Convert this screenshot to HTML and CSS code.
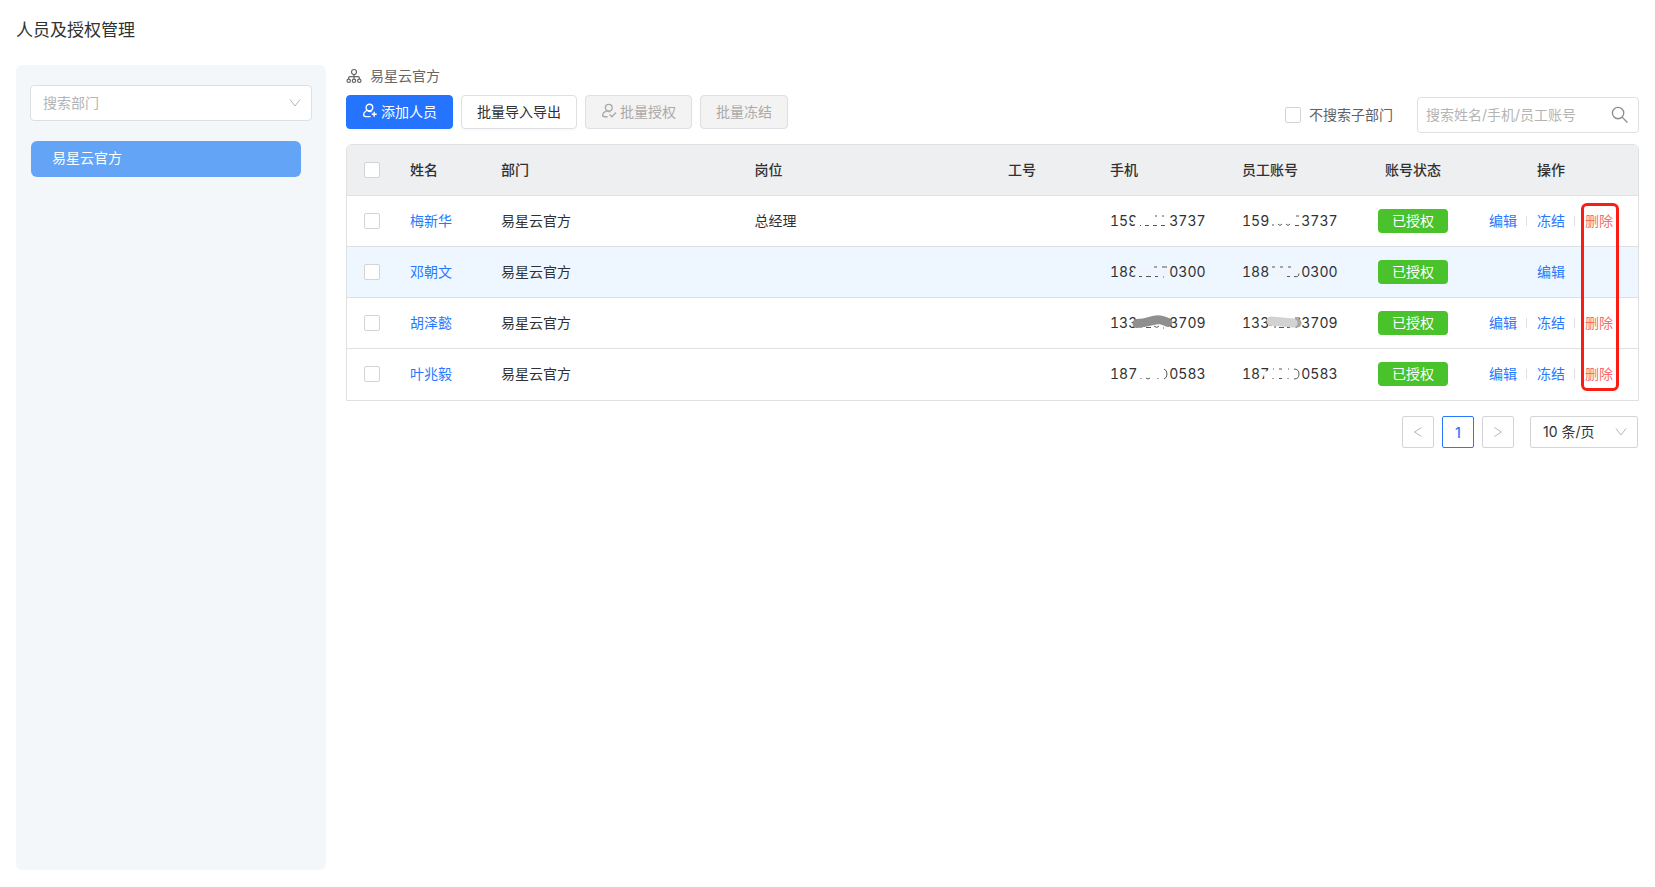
FILE: index.html
```html
<!DOCTYPE html>
<html lang="zh-CN">
<head>
    <meta charset="UTF-8">
    <meta name="viewport" content="width=device-width, initial-scale=1.0">
    <title>人员及授权管理</title>
    <link rel="stylesheet" href="styles.css">
</head>
<body>
    <div class="page">
        <h1>人员及授权管理</h1>
        <div class="layout">
            <aside class="sidebar">
                <div class="select-box dept-select">
                    <select aria-label="搜索部门">
                        <option>搜索部门</option>
                    </select>
                    <svg class="arrow" viewBox="0 0 12 12"><path d="M1 2.5 L6 9 L11 2.5"/></svg>
                </div>
                <a href="#" class="dept-item">易星云官方</a>
            </aside>

            <main class="content">
                <div class="crumb">
                    <svg class="icon thin" viewBox="0 0 16 16"><circle cx="8" cy="4" r="2.5"/><path d="M8 6.5V11M2.6 11V10q0-1.4 1.4-1.4h8q1.4 0 1.4 1.4V11"/><circle cx="2.7" cy="12.8" r="1.7"/><circle cx="8" cy="12.8" r="1.7"/><circle cx="13.3" cy="12.8" r="1.7"/></svg>
                    <span>易星云官方</span>
                </div>

                <div class="toolbar">
                    <div class="button-group">
                        <button class="btn primary">
                            <svg class="icon" viewBox="0 0 16 16"><circle cx="7.4" cy="4.6" r="3.3"/><path d="M5 7C6 8.4 7.6 8.6 9.6 8.6M5 7C4.8 8.4 1.6 8.4 1.6 11.6c0 1.6 1 2 2.2 2H8.6M12.2 8.7v5M9.7 11.2h5"/></svg>
                            添加人员
                        </button>
                        <button class="btn">批量导入导出</button>
                        <button class="btn" disabled>
                            <svg class="icon" viewBox="0 0 16 16"><circle cx="7.8" cy="4.8" r="3.4"/><path d="M5.8 7.4C6.6 8.6 7.8 8.8 9.4 8.8M5.8 7.4C5.4 8.8 1.6 8.8 1.6 12c0 1.4 1 1.8 2.2 1.8h2.8M8.6 11.4l2.4 2.4 4-4.2"/></svg>
                            批量授权
                        </button>
                        <button class="btn" disabled>批量冻结</button>
                    </div>
                    <div class="search-group">
                        <label class="check-label"><input type="checkbox">不搜索子部门</label>
                        <div class="search-box">
                            <input type="text" placeholder="搜索姓名/手机/员工账号" aria-label="搜索姓名/手机/员工账号">
                            <button class="search-btn" aria-label="搜索">
                                <svg viewBox="0 0 18 18"><circle cx="7.5" cy="7.5" r="6"/><path d="M11.8 11.8L17.4 17.4"/></svg>
                            </button>
                        </div>
                    </div>
                </div>

                <div class="table-wrap">
                    <table>
                        <thead>
                            <tr>
                                <th class="col-check"><input type="checkbox" aria-label="全选"></th>
                                <th class="col-name">姓名</th>
                                <th>部门</th>
                                <th>岗位</th>
                                <th class="col-no">工号</th>
                                <th class="col-phone">手机</th>
                                <th class="col-phone">员工账号</th>
                                <th class="col-status">账号状态</th>
                                <th class="col-action">操作</th>
                            </tr>
                        </thead>
                        <tbody>
                            <tr>
                                <td class="col-check"><input type="checkbox" aria-label="梅新华"></td>
                                <td><a href="#">梅新华</a></td>
                                <td>易星云官方</td>
                                <td>总经理</td>
                                <td></td>
                                <td class="num">159<svg class="mask" viewBox="0 0 32 12"><path class="smear" d="M0 6H32"/><path class="trace" d="M3 10.5h1M8 10.5h4M16 10.5h4M24 10.5h4M18 1h2M25 1h2"/></svg>3737</td>
                                <td class="num">159<svg class="mask" viewBox="0 0 32 12"><path class="smear" d="M4 5H29"/><path class="trace" d="M4 9v2M9 9q2 3 4 0M17 9q2 3 4 0M26 10.5h4M27 1h3"/></svg>3737</td>
                                <td class="col-status"><span class="tag">已授权</span></td>
                                <td class="col-action"><div class="actions"><a href="#">编辑</a><a href="#">冻结</a><a href="#" class="danger">删除</a></div></td>
                            </tr>
                            <tr class="active">
                                <td class="col-check"><input type="checkbox" aria-label="邓朝文"></td>
                                <td><a href="#">邓朝文</a></td>
                                <td>易星云官方</td>
                                <td></td>
                                <td></td>
                                <td class="num">188<svg class="mask" viewBox="0 0 32 12"><path class="smear" d="M0 6H32"/><path class="trace" d="M2 10.5h3M9 10.5h5M18 10.5h3M26 11h1M17 1h3M25 1h5"/></svg>0300</td>
                                <td class="num">188<svg class="mask" viewBox="0 0 32 12"><path class="smear" d="M4 6H27"/><path class="trace" d="M3 1h3M11 1h3M19 1h3M18 10.5h3M25 10.5q5 1 5-3"/></svg>0300</td>
                                <td class="col-status"><span class="tag">已授权</span></td>
                                <td class="col-action"><div class="actions"><a href="#">编辑</a></div></td>
                            </tr>
                            <tr>
                                <td class="col-check"><input type="checkbox" aria-label="胡泽懿"></td>
                                <td><a href="#">胡泽懿</a></td>
                                <td>易星云官方</td>
                                <td></td>
                                <td></td>
                                <td class="num">133<svg class="mask" viewBox="0 0 32 12"><path class="trace" d="M4 7v4M9 10.5h5M17 9q3 3 5 0M26 11h1"/><path class="brush" d="M0 6.5Q7 6 12 4.5Q20 2 24 3Q28 4 31 5.5"/></svg>3709</td>
                                <td class="num">133<svg class="mask" viewBox="0 0 32 12"><path class="trace" d="M0 8h3M6 7v4M10 10.5h5M18 10.5h3M26 1h5l-4 10"/><path class="brush end" d="M27 6h1"/><path class="brush light" d="M2 4L24 6"/></svg>3709</td>
                                <td class="col-status"><span class="tag">已授权</span></td>
                                <td class="col-action"><div class="actions"><a href="#">编辑</a><a href="#">冻结</a><a href="#" class="danger">删除</a></div></td>
                            </tr>
                            <tr>
                                <td class="col-check"><input type="checkbox" aria-label="叶兆毅"></td>
                                <td><a href="#">叶兆毅</a></td>
                                <td>易星云官方</td>
                                <td></td>
                                <td></td>
                                <td class="num">187<svg class="mask" viewBox="0 0 32 12"><path class="smear" d="M3 6H27"/><path class="trace" d="M4 10v1M9 10q2 2 4 0M21 10v1M27 1q3 1 3 5q0 4-3 5"/></svg>0583</td>
                                <td class="num">187<svg class="mask" viewBox="0 0 32 12"><path class="smear" d="M-1 7H27"/><path class="trace" d="M4 1h1M4 10v1M10 1h3M10 10.5h3M19 1h1M19 10v1M25 1q5 0 5 5q0 5-5 5"/></svg>0583</td>
                                <td class="col-status"><span class="tag">已授权</span></td>
                                <td class="col-action"><div class="actions"><a href="#">编辑</a><a href="#">冻结</a><a href="#" class="danger">删除</a></div></td>
                            </tr>
                        </tbody>
                    </table>
                    <div class="highlight"></div>
                </div>

                <div class="pagination">
                    <button class="page-btn" aria-label="上一页"><svg class="arrow" viewBox="0 0 12 12"><path d="M9.5 1.5L2.5 6l7 4.5"/></svg></button>
                    <button class="page-btn current">1</button>
                    <button class="page-btn" aria-label="下一页"><svg class="arrow" viewBox="0 0 12 12"><path d="M2.5 1.5L9.5 6l-7 4.5"/></svg></button>
                    <div class="select-box size-select">
                        <select aria-label="每页条数">
                            <option>10 条/页</option>
                        </select>
                        <svg class="arrow" viewBox="0 0 12 12"><path d="M1 2.5 L6 9 L11 2.5"/></svg>
                    </div>
                </div>
            </main>
        </div>
    </div>
</body>
</html>
```
FILE: styles.css
```css
* {
    box-sizing: border-box;
}
body {
    margin: 0;
    background-color: #fff;
    color: #303133;
    font-family: Inter, "Noto Sans CJK SC", sans-serif;
    font-size: 14px;
    line-height: 22px;
}
a {
    color: #2878ff;
    text-decoration: none;
}
button, input, select {
    font-family: inherit;
    font-size: 14px;
    color: inherit;
}
svg {
    fill: none;
    stroke: currentColor;
    flex-shrink: 0;
}
.page {
    display: flex;
    flex-direction: column;
    min-height: 100vh;
    padding: 18px 16px 17px;
}
h1 {
    margin: 0 0 23px;
    font-size: 17px;
    font-weight: 400;
    line-height: 24px;
}
.layout {
    display: flex;
    flex: 1;
    gap: 20px;
}

/* sidebar */
.sidebar {
    width: 310px;
    flex-shrink: 0;
    padding: 20px 14px;
    border-radius: 6px;
    background-color: #f3f7fa;
}
.select-box {
    position: relative;
}
.select-box select {
    width: 100%;
    height: 100%;
    padding: 0 12px 2px;
    border: 1px solid #dcdfe3;
    border-radius: 4px;
    background-color: #fff;
    appearance: none;
}
.select-box .arrow {
    position: absolute;
    top: 50%;
    right: 11px;
    margin-top: -6px;
    pointer-events: none;
}
.arrow {
    width: 12px;
    height: 12px;
    color: #b4b7bb;
}
.dept-select {
    height: 36px;
    margin-bottom: 20px;
}
.dept-select select {
    color: #b4b4b4;
}
.dept-item {
    display: block;
    margin: 0 11px 0 1px;
    padding: 6px 21px 8px;
    border-radius: 6px;
    background-color: #63a4f7;
    color: #fff;
}

/* toolbar */
.content {
    flex: 1;
    min-width: 0;
}
.icon {
    width: 16px;
    height: 16px;
    stroke-width: 1.4;
}
.icon.thin {
    stroke-width: 1.2;
}
.crumb {
    display: flex;
    align-items: center;
    gap: 8px;
    color: #666;
}
.toolbar {
    display: flex;
    justify-content: space-between;
    margin: 8px 0 11px;
}
.button-group {
    display: flex;
    align-items: flex-start;
    gap: 8px;
}
.btn {
    display: flex;
    align-items: center;
    gap: 3px;
    height: 34px;
    padding: 0 15px 2px;
    border: 1px solid #dcdfe3;
    border-radius: 4px;
    background-color: #fff;
    box-shadow: 0 2px 0 rgba(0,0,0,0.02);
    cursor: pointer;
}
.btn.primary {
    border-color: #2474ff;
    background-color: #2474ff;
    color: #fff;
}
.btn:disabled {
    background-color: #f3f3f3;
    color: #aaa;
    box-shadow: none;
    cursor: not-allowed;
}
.search-group {
    display: flex;
    align-items: center;
    gap: 24px;
    padding-top: 2px;
}
.check-label {
    display: flex;
    align-items: center;
    gap: 8px;
    color: #606266;
}
input[type="checkbox"] {
    display: block;
    width: 16px;
    height: 16px;
    margin: 0;
    border: 1px solid #d3d4d6;
    border-radius: 2px;
    background-color: #fff;
    appearance: none;
}
.search-box {
    display: flex;
    align-items: center;
    width: 222px;
    height: 36px;
    padding: 0 10px 2px 8px;
    border: 1px solid #dcdfe3;
    border-radius: 4px;
}
.search-box input {
    flex: 1;
    min-width: 0;
    padding: 0;
    border: none;
    outline: none;
}
.search-box input::placeholder {
    color: #b4b4b4;
}
.search-btn {
    display: flex;
    padding: 0;
    border: none;
    background: none;
    color: #8a8c90;
}
.search-btn svg {
    width: 17px;
    height: 17px;
    stroke-width: 1.4;
}

/* table */
.table-wrap {
    position: relative;
}
table {
    width: 100%;
    border: 1px solid #dfe0e2;
    border-radius: 6px 6px 0 0;
    border-spacing: 0;
    table-layout: fixed;
    overflow: hidden;
}
th, td {
    height: 51px;
    padding: 0 12px;
    border-bottom: 1px solid #dfe0e2;
    text-align: left;
}
tbody tr:last-child td {
    border-bottom-color: transparent;
}
th {
    background-color: #edeff1;
    font-weight: 500;
}
.active td {
    background-color: #eef7ff;
}
.col-check {
    width: 51px;
    padding: 0 17px;
}
.col-name {
    width: 91px;
}
.col-no {
    width: 102px;
}
.col-phone {
    width: 132px;
}
.col-status {
    width: 102px;
    text-align: center;
}
.col-action {
    width: 174px;
    text-align: center;
}
.num {
    font-variant-numeric: tabular-nums;
    white-space: nowrap;
}
.tag {
    display: inline-block;
    padding: 1px 14px;
    border-radius: 4px;
    background-color: #49c22b;
    color: #fff;
}
.actions {
    display: flex;
    justify-content: center;
}
.actions a + a {
    display: flex;
    align-items: center;
}
.actions a + a::before {
    content: "";
    width: 1px;
    height: 10px;
    margin: 0 10px 0 9px;
    background-color: #dfe0e2;
}
.actions .danger {
    color: #f56c6c;
}

/* hidden middle digits */
.mask {
    width: 32px;
    height: 12px;
    vertical-align: -1px;
    overflow: visible;
}
.smear {
    stroke: #fff;
    stroke-width: 8;
    stroke-linecap: round;
}
.active .smear {
    stroke: #f0f5fd;
}
.trace {
    stroke: #55575a;
}
.brush {
    stroke: #8f8f8f;
    stroke-width: 9;
    stroke-linecap: round;
}
.brush.light {
    stroke: #d2d2d2;
}
.brush.end {
    stroke: #a8a8a8;
}

.highlight {
    position: absolute;
    top: 59px;
    right: 20px;
    bottom: 10px;
    width: 38px;
    border: 3px solid #fb1d14;
    border-radius: 6px;
    pointer-events: none;
}

/* pagination */
.pagination {
    display: flex;
    justify-content: flex-end;
    gap: 8px;
    margin-top: 15px;
    padding-right: 1px;
}
.page-btn {
    display: flex;
    align-items: center;
    justify-content: center;
    width: 32px;
    height: 32px;
    padding: 0;
    border: 1px solid #d3d4d6;
    border-radius: 2px;
    background-color: #fff;
}
.page-btn.current {
    border-color: #2878ff;
    color: #2878ff;
    font-weight: 500;
}
.size-select {
    width: 108px;
    height: 32px;
    margin-left: 8px;
}
.size-select select {
    border-color: #d3d4d6;
    border-radius: 2px;
}
```
